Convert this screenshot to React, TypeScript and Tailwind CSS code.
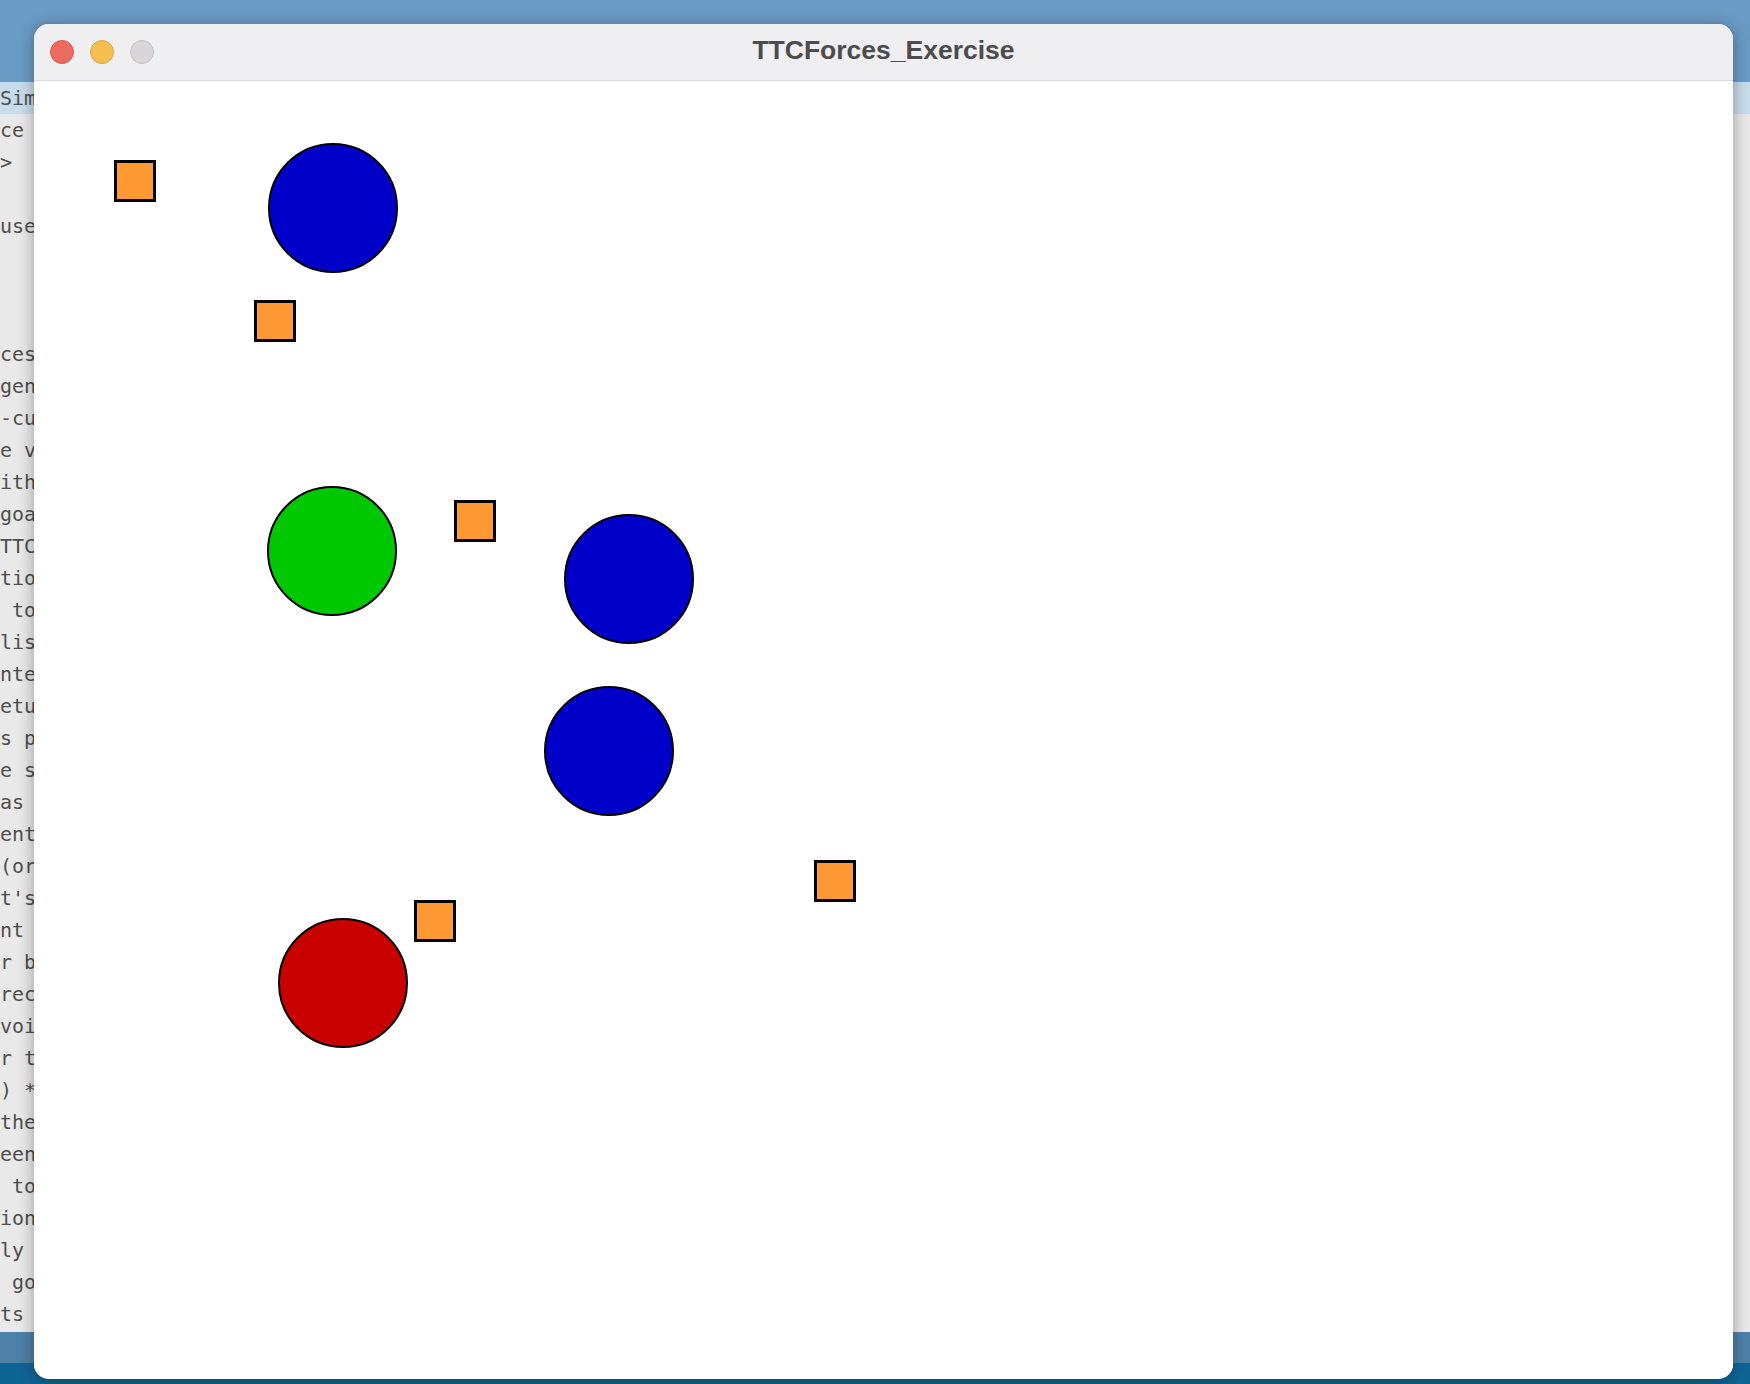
import React from "react";

const codeLines: { text: string; highlight?: boolean }[] = [
  { text: "Sim", highlight: true },
  { text: "ce " },
  { text: ">  " },
  { text: "   " },
  { text: "use" },
  { text: "   " },
  { text: "   " },
  { text: "   " },
  { text: "ces" },
  { text: "gen" },
  { text: "-cu" },
  { text: "e v" },
  { text: "ith" },
  { text: "goa" },
  { text: "TTC" },
  { text: "tio" },
  { text: " to" },
  { text: "lis" },
  { text: "nte" },
  { text: "etu" },
  { text: "s p" },
  { text: "e s" },
  { text: "as " },
  { text: "ent" },
  { text: "(or" },
  { text: "t's" },
  { text: "nt " },
  { text: "r b" },
  { text: "rec" },
  { text: "voi" },
  { text: "r t" },
  { text: ") *" },
  { text: "the" },
  { text: "een" },
  { text: " to" },
  { text: "ion" },
  { text: "ly " },
  { text: " go" },
  { text: "ts " },
];

type Shape = { kind: "circle" | "square"; left: number; top: number; color?: string };

const shapes: Shape[] = [
  { kind: "circle", left: 234, top: 62, color: "blue" },
  { kind: "circle", left: 233, top: 405, color: "green" },
  { kind: "circle", left: 530, top: 433, color: "blue" },
  { kind: "circle", left: 510, top: 605, color: "blue" },
  { kind: "circle", left: 244, top: 837, color: "red" },
  { kind: "square", left: 80, top: 79 },
  { kind: "square", left: 220, top: 219 },
  { kind: "square", left: 420, top: 419 },
  { kind: "square", left: 780, top: 779 },
  { kind: "square", left: 380, top: 819 },
];

function ShapeEl({ s }: { s: Shape }) {
  if (s.kind === "square") {
    return (
      <div
        className="absolute w-[42px] h-[42px] bg-[#ff9933] border-[3px] border-black"
        style={{ left: s.left, top: s.top }}
      />
    );
  }
  const colorClass =
    s.color === "green" ? "bg-[#00c800]" : s.color === "red" ? "bg-[#c80000]" : "bg-[#0000c8]";
  return (
    <div
      className={`absolute w-[130px] h-[130px] rounded-full border-[2px] border-black ${colorClass}`}
      style={{ left: s.left, top: s.top }}
    />
  );
}

export default function App() {
  return (
    <div className="relative w-[1750px] h-[1384px] overflow-hidden bg-[#e9e9e9]">
      {/* Backdrop: editor behind the window */}
      <div className="flex flex-col w-full h-full">
        <div className="h-[82px] bg-[#6a9bc5] shrink-0" />
        <div className="flex flex-col h-[1250px] bg-[#e9e9e9] shrink-0">
          {codeLines.map((l, i) => (
            <div
              key={i}
              className={`h-[32px] flex items-center whitespace-pre text-[20px] text-[#4f4f4f] ${
                l.highlight ? "bg-[#c9dceb]" : ""
              }`}
              style={{ fontFamily: '"DejaVu Sans Mono", "Liberation Mono", monospace' }}
            >
              {l.text}
            </div>
          ))}
        </div>
        <div className="h-[31px] bg-[#4f80a8] shrink-0" />
        <div className="flex-1 bg-[#0e6594]" />
      </div>

      {/* Window */}
      <div className="absolute left-[34px] top-[24px] w-[1699px] h-[1355px] rounded-[15px] overflow-hidden bg-white shadow-[0_2px_16px_rgba(0,0,0,0.35)] flex flex-col">
        <div className="relative h-[57px] shrink-0 bg-[#efeef0] border-b border-[#d9d8da] flex items-center pl-[16px] gap-[16px]">
          <div className="w-[24px] h-[24px] rounded-full bg-[#ed6a5e] border border-[#d9574c]" />
          <div className="w-[24px] h-[24px] rounded-full bg-[#f5bf4f] border border-[#dba63f]" />
          <div className="w-[24px] h-[24px] rounded-full bg-[#d8d6d9] border border-[#c3c1c4]" />
          <div
            className="absolute inset-0 flex items-center justify-center pb-[3px] text-[26.5px] font-bold text-[#4c4c4c] pointer-events-none"
            style={{ fontFamily: '"Liberation Sans", Arial, sans-serif' }}
          >
            TTCForces_Exercise
          </div>
        </div>
        <div className="relative flex-1 bg-white">
          {shapes.map((s, i) => (
            <ShapeEl key={i} s={s} />
          ))}
        </div>
      </div>
    </div>
  );
}
